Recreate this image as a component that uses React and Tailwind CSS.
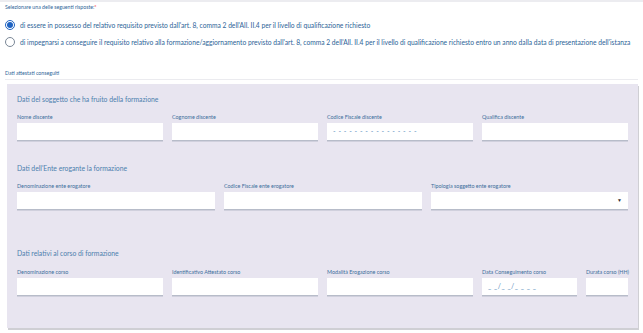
import { useState } from "react";

const LABEL = "block text-[5.4px] leading-[6px] text-[#3d6f9c] mb-[3px] whitespace-nowrap";
const INPUT = "h-[17px] bg-white shadow-[0_1.5px_0_#b7bcc9] text-[7px] text-[#4b82b5] px-[6px] flex items-center";

function Field({ label, width, children }) {
  return (
    <div className={width}>
      <span className={LABEL}>{label}</span>
      <div className={INPUT}>{children}</div>
    </div>
  );
}

function Radio({ checked, onClick, children }) {
  return (
    <label className="flex items-center gap-[5px] cursor-pointer" onClick={onClick}>
      <span
        className={`w-[10px] h-[10px] shrink-0 rounded-full border flex items-center justify-center ${
          checked ? "border-[#1f63c2]" : "border-[#7a8796]"
        }`}
      >
        {checked && <span className="w-[6px] h-[6px] rounded-full bg-[#1f63c2]" />}
      </span>
      <span className="text-[6.7px] leading-[9px] text-[#2d6497] whitespace-nowrap">{children}</span>
    </label>
  );
}

export default function App() {
  const [choice, setChoice] = useState(0);

  return (
    <div className="w-[643px] h-[333px] bg-white overflow-hidden border-t-2 border-[#ececf0]" style={{ fontFamily: "Lato, 'Open Sans', sans-serif" }}>
      <div className="px-[5px] pt-[2px]">
        <p className="text-[5.2px] leading-[6px] text-[#2d6497]">
          Selezionare una delle seguenti risposte:<span className="text-red-500">*</span>
        </p>
        <div className="mt-[10px] flex flex-col gap-[7px]">
          <Radio checked={choice === 0} onClick={() => setChoice(0)}>
            di essere in possesso del relativo requisito previsto dall'art. 8, comma 2 dell'All. II.4 per il livello di qualificazione richiesto
          </Radio>
          <Radio checked={choice === 1} onClick={() => setChoice(1)}>
            di impegnarsi a conseguire il requisito relativo alla formazione/aggiornamento previsto dall'art. 8, comma 2 dell'All. II.4 per il livello di qualificazione richiesto entro un anno dalla data di presentazione dell'istanza
          </Radio>
        </div>
        <p className="mt-[23px] text-[5.2px] leading-[6px] text-[#2d6497] pb-[3px] border-b border-[#ebebef]">
          Dati attestati conseguiti
        </p>
      </div>

      <div className="ml-[7px] mr-[5px] mt-[4px] bg-[#e8e5f0] shadow-[1px_2px_0_#cfcfd4] px-[10px] pt-[11px] h-[244px]">
        <h2 className="text-[6.8px] leading-[8px] text-[#4c80ae]">Dati del soggetto che ha fruito della formazione</h2>
        <div className="mt-[11px] flex gap-[9px]">
          <Field label="Nome discente" width="w-[146px]" />
          <Field label="Cognome discente" width="w-[146px]" />
          <Field label="Codice Fiscale discente" width="w-[146px]">
            <span className="tracking-[0.5px] text-[#5b8fc0]">- - - - - - - - - - - - - - - -</span>
          </Field>
          <Field label="Qualifica discente" width="w-[146px]" />
        </div>

        <h2 className="mt-[24px] text-[6.8px] leading-[8px] text-[#4c80ae]">Dati dell'Ente erogante la formazione</h2>
        <div className="mt-[11px] flex gap-[9px]">
          <Field label="Denominazione ente erogatore" width="w-[198px]" />
          <Field label="Codice Fiscale ente erogatore" width="w-[198px]" />
          <Field label="Tipologia soggetto ente erogatore" width="w-[197px]">
            <span className="ml-auto text-[5px] text-[#333]">▼</span>
          </Field>
        </div>

        <h2 className="mt-[40px] text-[6.8px] leading-[8px] text-[#4c80ae]">Dati relativi al corso di formazione</h2>
        <div className="mt-[12px] flex gap-[9px]">
          <Field label="Denominazione corso" width="w-[146px]" />
          <Field label="Identificativo Attestato corso" width="w-[146px]" />
          <Field label="Modalità Erogazione corso" width="w-[146px]" />
          <Field label="Data Conseguimento corso" width="w-[95px]">
            <span className="tracking-[0.5px] text-[#5b8fc0]">_ _/_ _/_ _ _ _</span>
          </Field>
          <Field label="Durata corso (HH)" width="w-[42px]" />
        </div>
      </div>
    </div>
  );
}
